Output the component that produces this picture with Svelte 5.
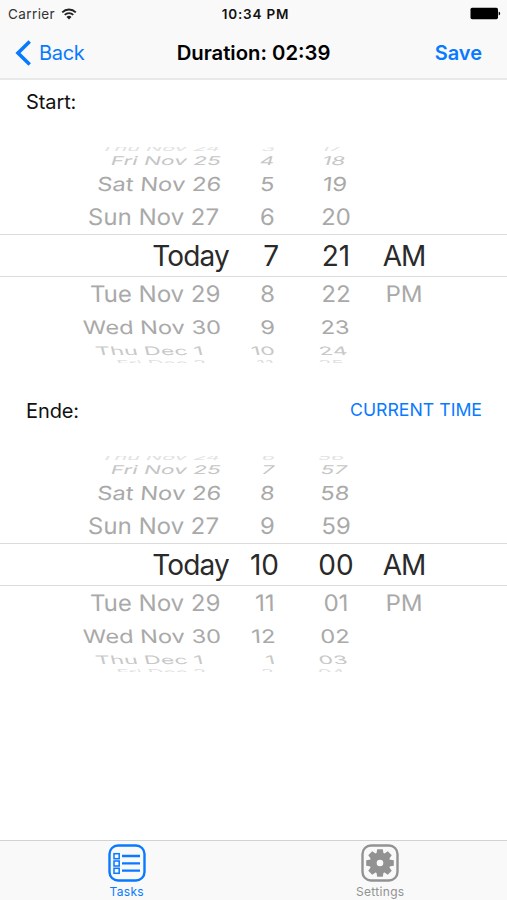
<script>
  const days = ['Thu Nov 24', 'Fri Nov 25', 'Sat Nov 26', 'Sun Nov 27', 'Today', 'Tue Nov 29', 'Wed Nov 30', 'Thu Dec 1', 'Fri Dec 2'];
  const depths = ['up4', 'up3', 'up2', 'up1', 'selected', 'down1', 'down2', 'down3', 'down4'];

  const pickers = [
    {
      label: 'Start:',
      hours: [3, 4, 5, 6, 7, 8, 9, 10, 11],
      minutes: ['17', '18', '19', '20', '21', '22', '23', '24', '25'],
    },
    {
      label: 'Ende:',
      action: 'CURRENT TIME',
      hours: [6, 7, 8, 9, 10, 11, 12, 1, 2],
      minutes: ['56', '57', '58', '59', '00', '01', '02', '03', '04'],
    },
  ];

  const periods = { selected: 'AM', down1: 'PM' };
</script>

<div class="screen">
  <header>
    <div class="status">
      <span class="carrier">
        Carrier
        <svg width="16" height="12" viewBox="0 0 16 12" fill="none" stroke="#222" stroke-width="1.8">
          <path d="M1.2 4.3a9.7 9.7 0 0 1 13.6 0" />
          <path d="M3.7 6.9a6.1 6.1 0 0 1 8.6 0" />
          <path d="M8 11.4 5.5 8.9a3.6 3.6 0 0 1 5 0z" fill="#222" stroke="none" />
        </svg>
      </span>
      <span class="clock">10:34 PM</span>
      <span class="battery">
        <svg width="31" height="13" viewBox="0 0 31 13">
          <rect x="0.5" y="0.8" width="27.5" height="11.4" rx="1.6" fill="#000" />
          <path d="M28.7 4.5c2 .8 2 3.2 0 4z" fill="#000" />
        </svg>
      </span>
    </div>
    <nav>
      <button class="back">
        <svg width="17" height="26" viewBox="0 0 17 26" fill="none" stroke="#087aff" stroke-width="3.6">
          <path d="M14.7 1.5 3 13l11.7 11.5" />
        </svg>
        <span>Back</span>
      </button>
      <h1>Duration: 02:39</h1>
      <button class="save">Save</button>
    </nav>
  </header>

  <main>
    {#each pickers as picker}
      <section>
        <div class="heading">
          <span class="label">{picker.label}</span>
          {#if picker.action}
            <button class="action">{picker.action}</button>
          {/if}
        </div>
        <div class="wheel">
          {#each depths as depth, i}
            <div class="row {depth}">
              <span class="date">{days[i]}</span>
              <span class="hour">{picker.hours[i]}</span>
              <span class="minute">{picker.minutes[i]}</span>
              <span class="period">{periods[depth] ?? ''}</span>
            </div>
          {/each}
        </div>
      </section>
    {/each}
  </main>

  <footer>
    <button class="tab active">
      <svg width="38" height="38" viewBox="0 0 38 38" fill="none" stroke="currentColor">
        <rect x="1.5" y="1.5" width="35" height="35" rx="8.5" stroke-width="2.4" />
        <g stroke-width="1.5">
          <rect x="6" y="9.7" width="5.2" height="5" />
          <rect x="6" y="17" width="5.2" height="5" />
          <rect x="6" y="24.3" width="5.2" height="5" />
        </g>
        <path d="M14 12h18M14 19.3h18M14 26.6h18" stroke-width="2.3" />
      </svg>
      <span>Tasks</span>
    </button>
    <button class="tab">
      <svg width="38" height="38" viewBox="0 0 38 38" fill="none" stroke="currentColor">
        <rect x="1.5" y="1.5" width="35" height="35" rx="8.5" stroke-width="2.4" />
        <g transform="translate(19 19)" fill="currentColor" stroke="none">
          {#each [0, 45, 90, 135] as angle}
            <path d="M-3.6 -9 -2.8 -13.8H2.8L3.6 -9V9L2.8 13.8H-2.8L-3.6 9z" transform="rotate({angle})" />
          {/each}
          <circle r="10.4" />
          <circle r="3.3" fill="#f9f9f9" />
        </g>
      </svg>
      <span>Settings</span>
    </button>
  </footer>
</div>

<style>
  :global(body) {
    margin: 0;
    background: #fff;
  }

  .screen {
    display: flex;
    flex-direction: column;
    width: 507px;
    height: 900px;
    overflow: hidden;
    font-family: Inter, 'Liberation Sans', sans-serif;
    color: #111;
  }

  button {
    padding: 0;
    border: 0;
    background: none;
    font: inherit;
    color: #087aff;
    white-space: nowrap;
  }

  svg {
    display: block;
    flex: none;
  }

  header {
    box-sizing: border-box;
    height: 80px;
    background: #f9f9f9;
    border-bottom: 2px solid #e9e9e9;
  }

  .status,
  nav {
    display: grid;
    grid-template-columns: 1fr auto 1fr;
    align-items: center;
  }

  .status {
    height: 27px;
    padding: 0 6px 0 8px;
    font-size: 13.5px;
  }

  .carrier {
    display: flex;
    align-items: center;
    gap: 6px;
    color: #333;
    letter-spacing: 0.4px;
  }

  .clock {
    margin-left: 2px;
    font-weight: 600;
    letter-spacing: 0.8px;
  }

  .battery {
    justify-self: end;
  }

  nav {
    height: 51px;
    padding: 0 15px;
    font-size: 20px;
  }

  .back {
    display: flex;
    align-items: center;
    gap: 7px;
  }

  .back span {
    letter-spacing: -0.3px;
  }

  h1 {
    margin: 0;
    font-size: 20.3px;
    font-weight: 600;
    color: #000;
  }

  .save {
    justify-self: end;
    margin-right: 10px;
    font-weight: 600;
  }

  main {
    flex: 1;
  }

  section {
    height: 309px;
  }

  .heading {
    display: flex;
    align-items: center;
    justify-content: space-between;
    height: 44px;
    padding: 0 25px 0 26px;
    font-size: 20px;
  }

  .label {
    letter-spacing: -0.1px;
  }

  .action {
    margin-bottom: 3px;
    font-size: 17.7px;
  }

  .wheel {
    margin-top: 23px;
  }

  .row {
    --shift: 0px;
    --drift: 0px;
    display: grid;
    grid-template-columns: 221px 54px 61px 68px;
    height: var(--h);
    line-height: var(--h);
    font-size: 24px;
    color: #a9a9a9;
    overflow: hidden;
    white-space: nowrap;
  }

  .row span {
    transform: scale(var(--sx), var(--sy)) skewX(var(--skew));
  }

  .date,
  .hour {
    justify-self: end;
    transform-origin: right center;
  }

  .date {
    margin-right: var(--shift);
  }

  .minute,
  .period {
    justify-self: end;
    width: 0;
    display: flex;
    justify-content: center;
  }

  .minute {
    margin-right: var(--drift);
  }

  .row.selected {
    box-sizing: border-box;
    --shift: -8px;
    --h: 43px;
    --sx: 1;
    --sy: 1;
    --skew: 0deg;
    line-height: 42px;
    border: solid #dcdcdc;
    border-width: 1px 0;
    font-size: 28px;
    color: #2a2a2a;
  }

  .selected .date {
    letter-spacing: -0.8px;
  }

  .selected .hour {
    margin-right: -4px;
  }

  .selected .period {
    letter-spacing: -1px;
  }

  .up1 {
    --shift: 2px;
    --h: 34px;
    --sx: 1;
    --sy: 0.95;
    --skew: -1deg;
  }

  .up2 {
    --drift: 1px;
    --h: 32px;
    --sx: 0.99;
    --sy: 0.8;
    --skew: -4deg;
    line-height: 33px;
  }

  .up3 {
    --drift: 2px;
    --h: 16px;
    --sx: 0.94;
    --sy: 0.5;
    --skew: -9deg;
    line-height: 17px;
    color: #c6c6c6;
  }

  .up4 {
    --shift: 1px;
    --drift: 5px;
    --h: 5px;
    --sx: 0.9;
    --sy: 0.34;
    --skew: -12deg;
    line-height: 0;
    color: #e2e2e2;
  }

  .down1 {
    --shift: 1px;
    --h: 34px;
    --sx: 1;
    --sy: 0.95;
    --skew: 1deg;
  }

  .down2 {
    --drift: 1px;
    --h: 32px;
    --sx: 0.985;
    --sy: 0.78;
    --skew: 3deg;
    line-height: 33px;
  }

  .down3 {
    --drift: 3px;
    --shift: 18px;
    --h: 15px;
    --sx: 0.96;
    --sy: 0.48;
    --skew: 7deg;
    color: #c8c8c8;
  }

  .down4 {
    --drift: 4px;
    --shift: 14px;
    --h: 5px;
    --sx: 0.88;
    --sy: 0.34;
    --skew: 12deg;
    line-height: 10px;
    color: #e0e0e0;
  }

  footer {
    display: grid;
    grid-template-columns: 1fr 1fr;
    box-sizing: border-box;
    height: 60px;
    background: #f9f9f9;
    border-top: 1px solid #d2d2d2;
  }

  .tab {
    display: flex;
    flex-direction: column;
    align-items: center;
    padding-top: 3px;
    color: #929292;
    font-size: 12px;
    line-height: 15px;
    letter-spacing: 0.3px;
  }

  .tab span {
    margin-top: 2px;
  }

  .tab.active {
    color: #087aff;
  }
</style>
